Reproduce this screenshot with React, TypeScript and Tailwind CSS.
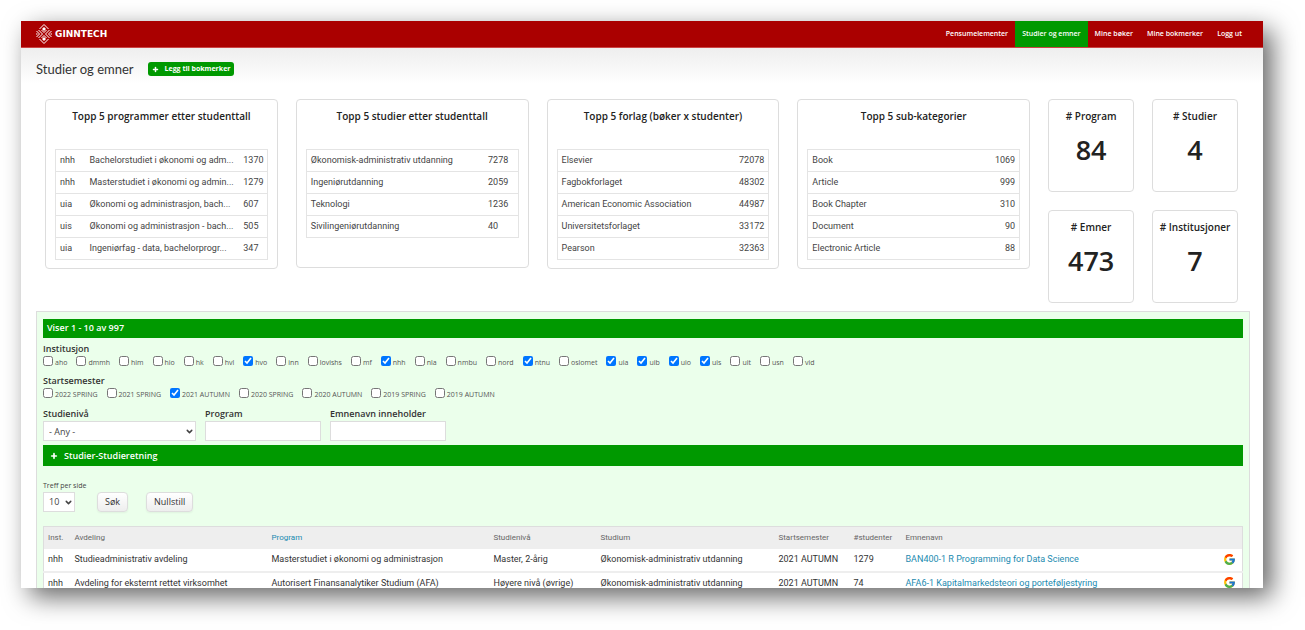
import { useState } from "react";
import { ChevronDown, Plus } from "lucide-react";
import { FcGoogle } from "react-icons/fc";

const navItems = ["Pensumelementer", "Studier og emner", "Mine bøker", "Mine bokmerker", "Logg ut"];

const topPrograms = [
  ["nhh", "Bachelorstudiet i økonomi og adm...", "1370"],
  ["nhh", "Masterstudiet i økonomi og admin...", "1279"],
  ["uia", "Økonomi og administrasjon, bach...", "607"],
  ["uis", "Økonomi og administrasjon - bach...", "505"],
  ["uia", "Ingeniørfag - data, bachelorprogr...", "347"],
];

const topStudies = [
  ["Økonomisk-administrativ utdanning", "7278"],
  ["Ingeniørutdanning", "2059"],
  ["Teknologi", "1236"],
  ["Sivilingeniørutdanning", "40"],
];

const topPublishers = [
  ["Elsevier", "72078"],
  ["Fagbokforlaget", "48302"],
  ["American Economic Association", "44987"],
  ["Universitetsforlaget", "33172"],
  ["Pearson", "32363"],
];

const topCategories = [
  ["Book", "1069"],
  ["Article", "999"],
  ["Book Chapter", "310"],
  ["Document", "90"],
  ["Electronic Article", "88"],
];

const institutions = [
  "aho", "dmmh", "him", "hio", "hk", "hvl", "hvo", "inn", "lovishs", "mf", "nhh", "nla",
  "nmbu", "nord", "ntnu", "oslomet", "uia", "uib", "uio", "uis", "uit", "usn", "vid",
];

const semesters = [
  "2022 SPRING", "2021 SPRING", "2021 AUTUMN", "2020 SPRING", "2020 AUTUMN", "2019 SPRING", "2019 AUTUMN",
];

const courses = [
  {
    inst: "nhh",
    department: "Studieadministrativ avdeling",
    program: "Masterstudiet i økonomi og administrasjon",
    level: "Master, 2-årig",
    study: "Økonomisk-administrativ utdanning",
    semester: "2021 AUTUMN",
    students: "1279",
    course: "BAN400-1 R Programming for Data Science",
  },
  {
    inst: "nhh",
    department: "Avdeling for eksternt rettet virksomhet",
    program: "Autorisert Finansanalytiker Studium (AFA)",
    level: "Høyere nivå (øvrige)",
    study: "Økonomisk-administrativ utdanning",
    semester: "2021 AUTUMN",
    students: "74",
    course: "AFA6-1 Kapitalmarkedsteori og porteføljestyring",
  },
];

const Logo = () => (
  <a href="#" className="flex items-center gap-[3px] text-white">
    <svg viewBox="0 0 32 40" className="h-5 w-4" fill="none" stroke="currentColor" strokeWidth="2">
      <path d="M7 10l9-9 9 9M11 12l5 5 5-5" />
      <path d="M7 30l9 9 9-9M11 28l5-5 5 5" />
      <path d="M16 6l4 4-4 4-4-4z M16 26l4 4-4 4-4-4z" fill="currentColor" stroke="none" />
      <path d="M1 14l6 6-6 6M5 12l8 8-8 8M31 14l-6 6 6 6M27 12l-8 8 8 8" />
      <path d="M0 20h3M29 20h3" />
    </svg>
    <span className="font-['DejaVu_Sans'] text-[9px] font-bold leading-none">GINNTECH</span>
  </a>
);

const Card = ({ title, children }: { title: string; children: React.ReactNode }) => (
  <section className="row-span-2 self-start rounded border border-[#ddd] bg-white px-[9px] pb-2">
    <h2 className="flex h-[49px] items-start justify-center pt-[9px] text-[10px] font-semibold leading-[14px] text-[#222]">
      {title}
    </h2>
    <div className="min-h-[110px]">{children}</div>
  </section>
);

const ListTable = ({ rows, numberClass }: { rows: string[][]; numberClass: string }) => (
  <table className="w-full table-fixed border-collapse border border-[#e4e4e4] font-[Roboto] text-[9px] leading-[14px]">
    <tbody>
      {rows.map((row) => (
        <tr key={row.join()} className="h-[22px] border-b border-[#e4e4e4]">
          {row.map((cell, i) => (
            <td
              key={i}
              className={
                i === row.length - 1
                  ? numberClass
                  : i === 0 && row.length === 3
                    ? "w-[30px] pb-0.5 pl-1"
                    : "whitespace-nowrap pb-0.5 pl-1"
              }
            >
              {cell}
            </td>
          ))}
        </tr>
      ))}
    </tbody>
  </table>
);

const StatCard = ({ title, value }: { title: string; value: string }) => (
  <section className="h-[93px] rounded border border-[#ddd] bg-white pt-[9px] text-center text-[#222]">
    <h2 className="whitespace-nowrap text-[10px] font-semibold leading-[14px]">{title}</h2>
    <p className="mt-[9px] text-[27px] font-semibold leading-9">{value}</p>
  </section>
);

const CheckGroup = ({ title, items, checked }: { title: string; items: string[]; checked: string[] }) => {
  const [selected, setSelected] = useState(checked);

  const toggle = (item: string) =>
    setSelected((prev) => (prev.includes(item) ? prev.filter((i) => i !== item) : [...prev, item]));

  return (
    <fieldset className="h-8">
      <legend className="text-[9px] font-semibold leading-[14px] text-[#333]">{title}</legend>
      <div className="flex gap-[9px]">
        {items.map((item) => (
          <label key={item} className="flex items-end gap-[2px] whitespace-nowrap text-[7px] leading-[10px] text-[#555]">
            <input
              type="checkbox"
              className="mb-[2px] size-[10px]"
              checked={selected.includes(item)}
              onChange={() => toggle(item)}
            />
            {item}
          </label>
        ))}
      </div>
    </fieldset>
  );
};

const App = () => {
  return (
    <div className="h-screen overflow-hidden bg-white pt-[21px] pr-[42px] pl-[21px] font-['Open_Sans',sans-serif] text-[#444]">
      <div className="h-[calc(100vh-63px)] overflow-hidden bg-white shadow-[9px_9px_24px_rgba(0,0,0,0.6)]">
        <header className="flex h-[27px] items-stretch justify-between border-b border-[#c44] bg-[#a00] pr-[14px] pl-[15px]">
          <Logo />
          <nav className="flex text-[7px] font-semibold text-white">
            {navItems.map((item) => (
              <a
                key={item}
                href="#"
                className={
                  item === "Studier og emner"
                    ? "flex items-center bg-[#090] px-[7px]"
                    : "flex items-center px-[7px]"
                }
              >
                {item}
              </a>
            ))}
          </nav>
        </header>

        <main className="bg-[linear-gradient(#eee,#fff_36px)] px-[15px]">
          <div className="flex h-[51px] items-center gap-[14px] pb-[9px]">
            <h1 className="font-[Lato] text-[13px] leading-5 text-[#333]">Studier og emner</h1>
            <button className="flex h-[14px] items-center gap-1.5 rounded-[3px] bg-[#090] px-1 text-[7px] font-bold text-white">
              <Plus className="size-[7px]" strokeWidth={5} />
              Legg til bokmerker
            </button>
          </div>

          <div className="grid grid-cols-[233fr_233fr_233fr_233fr_86fr_86fr] gap-[18px] pr-[10px] pl-[9px]">
            <Card title="Topp 5 programmer etter studenttall">
              <ListTable rows={topPrograms} numberClass="w-[28px] pb-0.5 pl-1" />
            </Card>
            <Card title="Topp 5 studier etter studenttall">
              <ListTable rows={topStudies} numberClass="w-[34px] pb-0.5 pl-1" />
            </Card>
            <Card title="Topp 5 forlag (bøker x studenter)">
              <ListTable rows={topPublishers} numberClass="w-12 pr-1 pb-0.5 text-right" />
            </Card>
            <Card title="Topp 5 sub-kategorier">
              <ListTable rows={topCategories} numberClass="w-12 pr-1 pb-0.5 text-right" />
            </Card>
            <StatCard title="# Program" value="84" />
            <StatCard title="# Studier" value="4" />
            <StatCard title="# Emner" value="473" />
            <StatCard title="# Institusjoner" value="7" />
          </div>

          <form
            className="mt-2 -mr-[2px] border border-[#ddd] bg-[#ebffeb] px-1.5 pt-[7px]"
            onSubmit={(e) => e.preventDefault()}
          >
            <p className="mb-1 h-[19px] bg-[#090] px-1 text-[9px] font-semibold leading-[18px] text-white">
              Viser 1 - 10 av 997
            </p>
            <CheckGroup title="Institusjon" items={institutions} checked={["hvo", "nhh", "ntnu", "uia", "uib", "uio", "uis"]} />
            <CheckGroup title="Startsemester" items={semesters} checked={["2021 AUTUMN"]} />

            <div className="flex gap-[9px] text-[9px] leading-[15px]">
              <div className="w-[153px]">
                <label htmlFor="level" className="block font-semibold text-[#333]">Studienivå</label>
                <div className="relative">
                  <select id="level" className="block h-5 w-full appearance-none border border-[#ddd] bg-white pl-[5px]">
                    <option>- Any -</option>
                  </select>
                  <ChevronDown className="pointer-events-none absolute top-1.5 right-[2px] size-[9px]" strokeWidth={4} />
                </div>
              </div>
              <div className="w-[116px]">
                <label htmlFor="program" className="block font-semibold text-[#333]">Program</label>
                <input id="program" className="block h-5 w-full border border-[#ddd] bg-white px-1" />
              </div>
              <div className="w-[116px]">
                <label htmlFor="course" className="block font-semibold whitespace-nowrap text-[#333]">Emnenavn inneholder</label>
                <input id="course" className="block h-5 w-full border border-[#ddd] bg-white px-1" />
              </div>
            </div>

            <button className="mt-1 flex h-[21px] w-full items-center gap-1.5 bg-[#090] pl-[7px] text-[9px] font-semibold text-white">
              <Plus className="size-2" strokeWidth={5} />
              Studier-Studieretning
            </button>

            <div className="mt-[14px] flex items-end text-[9px]">
              <div className="w-[54px]">
                <label htmlFor="size" className="block text-[7px] leading-3 whitespace-nowrap">Treff per side</label>
                <div className="relative w-8">
                  <select id="size" className="block h-5 w-full appearance-none border border-[#ddd] bg-white pl-[5px]">
                    <option>10</option>
                    <option>25</option>
                    <option>50</option>
                  </select>
                  <ChevronDown className="pointer-events-none absolute top-1.5 right-[2px] size-[9px]" strokeWidth={4} />
                </div>
              </div>
              <button className="h-5 rounded-sm border border-[#ddd] bg-linear-to-b from-white to-[#eee] px-[7px] text-[#333] shadow-xs">
                Søk
              </button>
              <button className="ml-[18px] h-5 rounded-sm border border-[#ddd] bg-linear-to-b from-white to-[#eee] px-[7px] text-[#333] shadow-xs">
                Nullstill
              </button>
            </div>

            <table className="mt-[14px] w-full table-fixed border-collapse border border-[#ddd] bg-white text-left font-[Roboto] text-[9px] leading-[14px] text-[#333]">
              <thead>
                <tr className="h-[22px] bg-[#eee] text-[8px] text-[#666] *:px-1 *:font-normal">
                  <th className="w-[27px]">Inst.</th>
                  <th className="w-[197px]">Avdeling</th>
                  <th className="w-[222px]"><a href="#" className="text-[#1b8bb0]">Program</a></th>
                  <th className="w-[107px]">Studienivå</th>
                  <th className="w-[178px]">Studium</th>
                  <th className="w-[75px]">Startsemester</th>
                  <th className="w-[52px]">#studenter</th>
                  <th>Emnenavn</th>
                  <th className="w-[24px]"></th>
                </tr>
              </thead>
              <tbody>
                {courses.map((row) => (
                  <tr key={row.course} className="h-[23px] border-b-2 border-[#eee] whitespace-nowrap *:px-1 *:pb-px">
                    <td>{row.inst}</td>
                    <td>{row.department}</td>
                    <td>{row.program}</td>
                    <td>{row.level}</td>
                    <td>{row.study}</td>
                    <td>{row.semester}</td>
                    <td>{row.students}</td>
                    <td><a href="#" className="text-[#1b8bb0]">{row.course}</a></td>
                    <td><a href="#" aria-label="Google"><FcGoogle className="size-[13px]" /></a></td>
                  </tr>
                ))}
              </tbody>
            </table>
          </form>
        </main>
      </div>
    </div>
  );
};

export default App;
